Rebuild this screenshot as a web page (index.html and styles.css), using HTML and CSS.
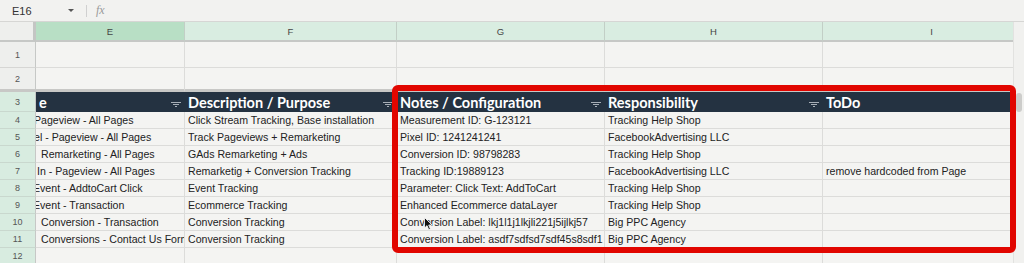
FILE: index.html
```html
<!DOCTYPE html>
<html>
<head>
<meta charset="utf-8">
<link rel="stylesheet" href="styles.css">
</head>
<body>
<div class="app">
  <div class="fbar">
    <span class="namebox">E16</span>
    <span class="caret"></span>
    <span class="sep"></span>
    <span class="fx">fx</span>
  </div>
  <div class="main">
    <div class="sheet">
      <div class="grid">
        <div class="corner"></div>
        <div class="ch ch-sel">E</div>
        <div class="ch">F</div>
        <div class="ch">G</div>
        <div class="ch">H</div>
        <div class="ch">I</div>

        <div class="rn rn-plain r-tall">1</div>
        <div class="c r-tall"></div><div class="c r-tall"></div><div class="c r-tall"></div><div class="c r-tall"></div><div class="c r-tall"></div>

        <div class="rn rn-plain r-frz">2</div>
        <div class="c r-frz"></div><div class="c r-frz"></div><div class="c r-frz"></div><div class="c r-frz"></div><div class="c r-frz"></div>

        <div class="rn">3</div>
        <div class="h"><span class="ht">e</span><span class="filt"><i></i><i></i><i></i></span></div>
        <div class="h"><span class="ht">Description / Purpose</span><span class="filt"><i></i><i></i><i></i></span></div>
        <div class="h"><span class="ht">Notes / Configuration</span><span class="filt"><i></i><i></i><i></i></span></div>
        <div class="h"><span class="ht">Responsibility</span><span class="filt"><i></i><i></i><i></i></span></div>
        <div class="h"><span class="ht">ToDo</span></div>

        <div class="rn">4</div>
        <div class="c ce"><span class="off-n2">Pageview - All Pages</span></div>
        <div class="c">Click Stream Tracking, Base installation</div>
        <div class="c">Measurement ID: G-123121</div>
        <div class="c">Tracking Help Shop</div>
        <div class="c"></div>

        <div class="rn">5</div>
        <div class="c ce"><span class="off-n2">el - Pageview - All Pages</span></div>
        <div class="c">Track Pageviews + Remarketing</div>
        <div class="c">Pixel ID: 1241241241</div>
        <div class="c">FacebookAdvertising LLC</div>
        <div class="c"></div>

        <div class="rn">6</div>
        <div class="c ce"><span class="off-5">Remarketing - All Pages</span></div>
        <div class="c">GAds Remarketing + Ads</div>
        <div class="c">Conversion ID: 98798283</div>
        <div class="c">Tracking Help Shop</div>
        <div class="c"></div>

        <div class="rn">7</div>
        <div class="c ce"><span class="off-1">In - Pageview - All Pages</span></div>
        <div class="c">Remarketig + Conversion Tracking</div>
        <div class="c">Tracking ID:19889123</div>
        <div class="c">FacebookAdvertising LLC</div>
        <div class="c">remove hardcoded from Page</div>

        <div class="rn">8</div>
        <div class="c ce"><span class="off-n3">Event - AddtoCart Click</span></div>
        <div class="c">Event Tracking</div>
        <div class="c">Parameter: Click Text: AddToCart</div>
        <div class="c">Tracking Help Shop</div>
        <div class="c"></div>

        <div class="rn">9</div>
        <div class="c ce"><span class="off-n3">Event - Transaction</span></div>
        <div class="c">Ecommerce Tracking</div>
        <div class="c">Enhanced Ecommerce dataLayer</div>
        <div class="c">Tracking Help Shop</div>
        <div class="c"></div>

        <div class="rn">10</div>
        <div class="c ce"><span class="off-5">Conversion - Transaction</span></div>
        <div class="c">Conversion Tracking</div>
        <div class="c">Conversion Label: lkj1l1j1lkjli221j5ijlkj57</div>
        <div class="c">Big PPC Agency</div>
        <div class="c"></div>

        <div class="rn">11</div>
        <div class="c ce"><span class="off-5">Conversions - Contact Us Form</span></div>
        <div class="c">Conversion Tracking</div>
        <div class="c">Conversion Label: asdf7sdfsd7sdf45s8sdf1</div>
        <div class="c">Big PPC Agency</div>
        <div class="c"></div>

        <div class="rn">12</div>
        <div class="c"></div><div class="c"></div><div class="c"></div><div class="c"></div><div class="c"></div>
      </div>
    </div>
    <div class="scrollbar"><div class="thumb"></div></div>
  </div>
  <div class="highlight"></div>
  <svg class="cursor" width="9" height="14" viewBox="0 0 9 14"><path d="M0.5 0.5 L0.5 11 L3 8.6 L4.8 12.8 L6.4 12.1 L4.7 8 L8 8 Z" fill="#111" stroke="#fff" stroke-width="0.8"/></svg>
</div>
</body>
</html>
```
FILE: styles.css
```css
* { box-sizing: border-box; }
html, body { margin: 0; padding: 0; }
body {
  width: 1024px;
  height: 263px;
  overflow: hidden;
  background: #f3f3f1;
  font-family: "Liberation Sans", Arial, sans-serif;
  color: #222;
}
.app { position: relative; width: 1024px; height: 263px; overflow: hidden; }

.fbar {
  height: 22px;
  display: flex;
  align-items: center;
  background: #f2f2f0;
  border-bottom: 1px solid #d6d6d4;
  padding-left: 12px;
}
.namebox { font-size: 11px; color: #333; width: 55px; }
.caret {
  width: 0; height: 0;
  border-left: 3px solid transparent;
  border-right: 3px solid transparent;
  border-top: 3px solid #555;
  margin-left: 1px;
}
.sep { width: 1px; height: 12px; background: #d0d0d0; margin-left: 12px; }
.fx {
  margin-left: 9px;
  font-family: "Liberation Serif", serif;
  font-style: italic;
  font-size: 12px;
  color: #9a9a9a;
}

.main { display: flex; height: 241px; }
.sheet { flex: 1; overflow: hidden; }
.scrollbar {
  width: 11px;
  background: #f1f1ef;
  border-left: 1px solid #e2e2e0;
  position: relative;
}
.thumb {
  position: absolute;
  top: 71px;
  left: 2px;
  width: 6px;
  height: 19px;
  border-radius: 3px;
  background: #cdcdcb;
}

.grid {
  display: grid;
  grid-template-columns: 36px 149px 212px 208px 218px 218px;
  grid-template-rows: 20px 26px 24px 20px repeat(9, 17px);
  width: 843px;
}

.corner {
  background: #eeefed;
  border-right: 3px solid #c4c6c4;
  border-bottom: 2px solid #c6c8c6;
}
.ch {
  display: flex;
  align-items: center;
  justify-content: center;
  font-size: 9.5px;
  color: #444;
  background: #d9ede1;
  border-right: 1px solid #c2cfc6;
  border-bottom: 2px solid #c6c8c6;
}
.ch-sel { background: #b8dfc5; }

.rn {
  display: flex;
  align-items: center;
  justify-content: center;
  font-size: 9px;
  color: #555;
  background: #d8ece0;
  border-right: 1px solid #c6c8c6;
  border-bottom: 1px solid #c9d8ce;
}
.rn-plain { background: #eeefed; border-bottom-color: #d6d6d4; }

.c {
  display: flex;
  align-items: center;
  padding: 0 3px;
  font-size: 10.6px;
  white-space: nowrap;
  overflow: hidden;
  background: #f4f4f2;
  border-right: 1px solid #dcdcda;
  border-bottom: 1px solid #dcdcda;
}
.ce { padding: 0; }
.r-frz { border-bottom: 3px solid #c8c8c6; }

.off-n2 { margin-left: -2px; }
.off-n3 { margin-left: -3px; }
.off-1 { margin-left: 1px; }
.off-5 { margin-left: 5px; }

.h {
  display: flex;
  align-items: center;
  justify-content: space-between;
  padding: 0 4px 0 3px;
  background: #243241;
  color: #fff;
  font-family: Lato, "Liberation Sans", sans-serif;
  font-weight: 700;
  font-size: 14.5px;
  white-space: nowrap;
  overflow: hidden;
}
.h:first-of-type { padding-left: 1px; }
.filt {
  display: flex;
  flex-direction: column;
  align-items: center;
  gap: 1px;
  width: 10px;
  margin-top: 4px;
}
.filt i { display: block; height: 1px; background: #a7aeb6; }
.filt i:nth-child(1) { width: 10px; }
.filt i:nth-child(2) { width: 6px; }
.filt i:nth-child(3) { width: 2px; }

.highlight {
  position: absolute;
  left: 392px;
  top: 85px;
  width: 624px;
  height: 168px;
  border: 6px solid #e10600;
  border-radius: 6px;
}
.cursor { position: absolute; left: 424px; top: 217px; }
```
